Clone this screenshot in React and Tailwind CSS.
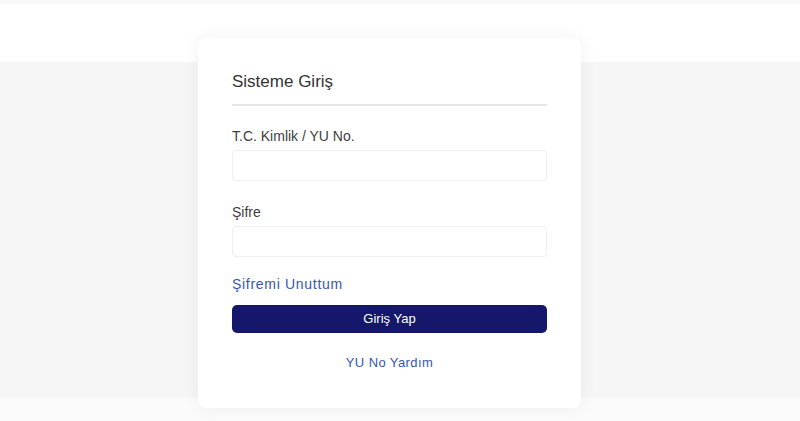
export default function App() {
  return (
    <div className="min-h-screen bg-[#fbfbfc] font-['Liberation_Sans',Arial,sans-serif]">
      <header className="h-[62px] border-t-[4px] border-[#f9f9fa] bg-white" />
      <main className="flex h-[336px] justify-center bg-[#f6f6f7]">
        <div className="relative z-10 -mt-[24px] mr-[21px] h-[370px] w-[383px] rounded-lg bg-white px-[34px] pt-[32px] shadow-[0_0_18px_rgba(0,0,0,0.06)]">
          <h2 className="text-[17px] leading-6 text-[#333]">Sisteme Giriş</h2>
          <div className="mt-[10px] h-[2px] bg-[#e6e6e6]" />

          <label className="mt-[20px] block text-[14px] leading-5 text-[#404040]">T.C. Kimlik / YU No.</label>
          <input className="mt-[4px] block h-[31px] w-full rounded border border-[#efefef] bg-white px-2 text-sm outline-none" />

          <label className="mt-[21px] block text-[14px] leading-5 text-[#404040]">Şifre</label>
          <input type="password" className="mt-[4px] block h-[31px] w-full rounded border border-[#efefef] bg-white px-2 text-sm outline-none" />

          <a href="#" className="mt-[17px] block text-[14px] leading-5 tracking-[0.7px] text-[#3557b0]">Şifremi Unuttum</a>

          <button className="mt-[11px] block h-[28px] w-full rounded-[5px] bg-[#15176b] text-[13px] text-white">Giriş Yap</button>

          <a href="#" className="mt-[20px] block text-center text-[13px] leading-5 tracking-[0.4px] text-[#3557b0]">YU No Yardım</a>
        </div>
      </main>
    </div>
  );
}
